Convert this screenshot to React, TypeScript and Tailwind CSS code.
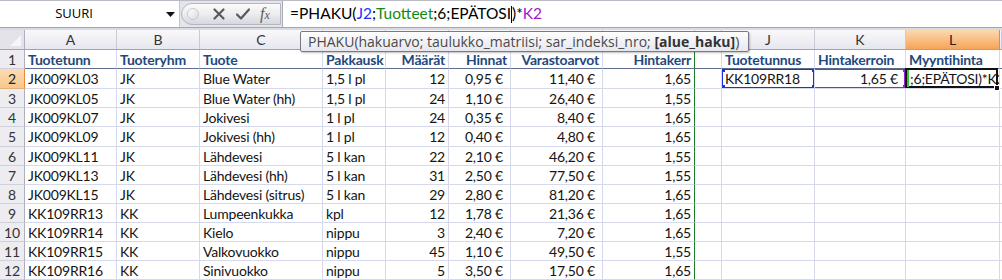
import React from "react";

type Col = { w: string; align?: "r"; money?: boolean };

// column layout A..L plus a sliver of M
const COLS: Col[] = [
  { w: "w-[92px]" },
  { w: "w-[83px]" },
  { w: "w-[123px]" },
  { w: "w-[63px]" },
  { w: "w-[63px]", align: "r" },
  { w: "w-[62px]", align: "r", money: true },
  { w: "w-[92px]", align: "r", money: true },
  { w: "w-[92px]", align: "r" },
  { w: "w-[27px]" },
  { w: "w-[93px]" },
  { w: "w-[91px]", align: "r", money: true },
  { w: "w-[94px]" },
  { w: "w-[2px]" },
];

const LETTERS = ["A", "B", "C", "D", "E", "F", "G", "H", "I", "J", "K", "L", ""];

const HEADER = ["Tuotetunn", "Tuoteryhm", "Tuote", "Pakkausk", "Määrät", "Hinnat", "Varastoarvot", "Hintakerr", "", "Tuotetunnus", "Hintakerroin", "Myyntihinta", ""];
// headings E..H sit on the right, the lookup block on the left
const HEADER_RIGHT = [4, 5, 6, 7];

const ROWS: string[][] = [
  ["JK009KL03", "JK", "Blue Water", "1,5 l pl", "12", "0,95 €", "11,40 €", "1,65"],
  ["JK009KL05", "JK", "Blue Water (hh)", "1,5 l pl", "24", "1,10 €", "26,40 €", "1,55"],
  ["JK009KL07", "JK", "Jokivesi", "1 l pl", "24", "0,35 €", "8,40 €", "1,65"],
  ["JK009KL09", "JK", "Jokivesi (hh)", "1 l pl", "12", "0,40 €", "4,80 €", "1,65"],
  ["JK009KL11", "JK", "Lähdevesi", "5 l kan", "22", "2,10 €", "46,20 €", "1,55"],
  ["JK009KL13", "JK", "Lähdevesi (hh)", "5 l kan", "31", "2,50 €", "77,50 €", "1,55"],
  ["JK009KL15", "JK", "Lähdevesi (sitrus)", "5 l kan", "29", "2,80 €", "81,20 €", "1,65"],
  ["KK109RR13", "KK", "Lumpeenkukka", "kpl", "12", "1,78 €", "21,36 €", "1,65"],
  ["KK109RR14", "KK", "Kielo", "nippu", "3", "2,40 €", "7,20 €", "1,65"],
  ["KK109RR15", "KK", "Valkovuokko", "nippu", "45", "1,10 €", "49,50 €", "1,55"],
  ["KK109RR16", "KK", "Sinivuokko", "nippu", "5", "3,50 €", "17,50 €", "1,65"],
];

const ROW_H = ["h-[20px]", "h-[19px]", "h-[19px]", "h-[20px]", "h-[19px]", "h-[19px]", "h-[19px]", "h-[19px]", "h-[19px]", "h-[19px]", "h-[19px]"];

function Handle({ className }: { className: string }) {
  return <div className={`absolute w-[5px] h-[5px] ${className}`} />;
}

function FormulaBar() {
  return (
    <div className="flex h-[28px] bg-[#e4e5eb] border-t border-[#b9bac4] border-b border-b-[#a4a6b3]">
      {/* name box */}
      <div className="w-[180px] bg-white flex items-center relative border-r border-[#c3c5cf]">
        <span className="w-[148px] text-center text-[13px] text-black font-['Open_Sans',sans-serif]">SUURI</span>
        <svg className="absolute left-[166px] top-[11px]" width="9" height="5" viewBox="0 0 9 5">
          <path d="M0 0 H9 L4.5 5 Z" fill="#111" />
        </svg>
      </div>
      {/* cancel / enter / fx */}
      <div className="w-[102px] flex items-center pl-[1px]">
        <div className="relative h-[22px] w-[100px] rounded-l-full border border-[#b3b5c1] bg-gradient-to-b from-[#fbfbfc] via-[#eceded] to-[#d6d8e0] flex items-center">
          <div className="ml-[5px] w-[12px] h-[12px] rounded-full border border-[#c9cad2] bg-gradient-to-br from-white to-[#d9dae2]" />
          <svg className="ml-[14px]" width="12" height="12" viewBox="0 0 12 12">
            <path d="M1.5 1.5 L10.5 10.5 M10.5 1.5 L1.5 10.5" stroke="#5a5a5e" strokeWidth="2.2" strokeLinecap="round" />
          </svg>
          <svg className="ml-[11px]" width="14" height="12" viewBox="0 0 14 12">
            <path d="M1 6.5 L5 10.5 L13 1.5" stroke="#5a5a5e" strokeWidth="2.2" fill="none" strokeLinejoin="round" strokeLinecap="round" />
          </svg>
          <span className="ml-[10px] font-['Liberation_Serif',serif] italic text-[16px] text-[#5a5a5e] leading-none">
            f<span className="text-[12px]">x</span>
          </span>
        </div>
      </div>
      {/* formula */}
      <div className="flex-1 bg-white border-l border-[#a9abb6] flex items-center pl-[7px] text-[15.5px] font-['Lato',sans-serif] text-black whitespace-nowrap">
        <span>=PHAKU(</span>
        <span className="text-[#2233ff]">J2</span>
        <span>;</span>
        <span className="text-[#108a10]">Tuotteet</span>
        <span>;6;EPÄTOSI</span>
        <span className="w-px h-[17px] bg-black" />
        <span>)*</span>
        <span className="text-[#a020c8]">K2</span>
      </div>
    </div>
  );
}

function ColumnHeaders() {
  return (
    <div className="flex h-[20px] border-b border-[#9fa3b5]">
      <div className="w-[25px] bg-[#e3e3e9] border-r border-[#aeb0bd] relative">
        <svg className="absolute right-[3px] bottom-[3px]" width="11" height="11" viewBox="0 0 11 11">
          <path d="M11 0 V11 H0 Z" fill="#f6f6f8" />
        </svg>
      </div>
      {COLS.map((c, i) => {
        const sel = LETTERS[i] === "L";
        return (
          <div
            key={i}
            className={`${c.w} shrink-0 flex items-center justify-center text-[14px] font-['Lato',sans-serif] border-r ${
              sel
                ? "bg-gradient-to-b from-[#fbd9b0] to-[#f6a456] border-[#e9893a] text-[#222]"
                : "bg-gradient-to-b from-[#f9f9fb] to-[#e6e6ee] border-[#c9cad6] text-[#333]"
            }`}
          >
            {LETTERS[i]}
          </div>
        );
      })}
    </div>
  );
}

function RowHead({ n, h, sel }: { n: number; h: string; sel?: boolean }) {
  return (
    <div
      className={`w-[25px] shrink-0 ${h} flex items-center justify-center text-[14px] font-['Lato',sans-serif] border-r border-b ${
        sel
          ? "bg-gradient-to-b from-[#fcdcb4] to-[#f8c78b] border-r-[#e9893a] border-b-[#e3b27a] text-[#222]"
          : "bg-[#ececf1] border-r-[#aeb0bd] border-b-[#cfd0db] text-[#333]"
      }`}
    >
      {n}
    </div>
  );
}

export default function App() {
  return (
    <div className="w-[1002px] h-[280px] overflow-hidden bg-white relative font-['Lato',sans-serif]">
      <FormulaBar />
      <div className="h-[2px] bg-[#d9dae2]" />
      <ColumnHeaders />

      {/* row 1: table headings */}
      <div className="flex h-[19px]">
        <RowHead n={1} h="h-[19px]" />
        {COLS.map((c, i) => (
          <div
            key={i}
            className={`${c.w} shrink-0 h-[19px] flex items-center whitespace-nowrap overflow-hidden border-b border-b-[#5d6c8d] border-r text-[14px] font-bold text-[#1f497d] tracking-[-0.2px] ${
              i === 7 ? "border-r-[#1e7b2a]" : "border-r-[#d6d9ec]"
            } ${HEADER_RIGHT.includes(i) ? "justify-end pr-[3px]" : "pl-[3px]"}`}
          >
            {HEADER[i]}
          </div>
        ))}
      </div>

      {ROWS.map((r, ri) => {
        const h = ROW_H[ri];
        const first = ri === 0;
        return (
          <div key={ri} className="flex">
            <RowHead n={ri + 2} h={h} sel={first} />
            {COLS.map((c, i) => {
              let text: React.ReactNode = i < 8 ? r[i] : "";
              let extra = "";
              let overlay: React.ReactNode = null;
              if (first && i === 9) {
                text = "KK109RR18";
                overlay = (
                  <>
                    <div className="absolute inset-0 border border-[#1f2fe8]" />
                    <Handle className="-left-[2px] -top-[2px] bg-[#1f2fe8]" />
                    <Handle className="-right-[3px] -top-[2px] bg-[#1f2fe8]" />
                    <Handle className="-left-[2px] -bottom-[2px] bg-[#1f2fe8]" />
                    <Handle className="-right-[3px] -bottom-[2px] bg-[#1f2fe8]" />
                  </>
                );
              }
              if (first && i === 10) {
                text = "1,65 €";
                overlay = (
                  <>
                    <div className="absolute inset-0 border border-[#a01fd0] border-l-0" />
                    <Handle className="-right-[3px] -top-[2px] bg-[#a01fd0]" />
                    <Handle className="-right-[3px] -bottom-[2px] bg-[#a01fd0]" />
                  </>
                );
              }
              if (first && i === 11) {
                text = ";6;EPÄTOSI)*K2";
                extra = "z-10";
                overlay = (
                  <>
                    <div className="absolute -left-[1px] -top-[1px] right-[1px] bottom-0 border-2 border-[#111]" />
                    <div className="absolute left-[1px] top-[1px] bottom-[1px] w-[2px] bg-[#38c43a]" />
                    <Handle className="right-[-1px] -bottom-[3px] bg-[#111] border border-white w-[6px] h-[6px]" />
                  </>
                );
              }
              const pad = c.align === "r" ? (c.money ? "justify-end pr-[7px]" : "justify-end pr-[3px]") : "pl-[3px]";
              const right = i === 7 ? "border-r-[#1e7b2a]" : "border-r-[#d6d9ec]";
              return (
                <div
                  key={i}
                  className={`${c.w} shrink-0 ${h} relative flex items-center whitespace-nowrap border-r border-b border-b-[#d6d9ec] ${right} text-[14px] text-[#141414] tracking-[-0.2px] ${pad} ${extra} ${
                    i === 11 ? "overflow-visible" : "overflow-hidden"
                  }`}
                >
                  {i === 11 && first ? (
                    <span className="pl-[1px] overflow-hidden w-[90px] block">{text}</span>
                  ) : (
                    text
                  )}
                  {overlay}
                </div>
              );
            })}
          </div>
        );
      })}

      {/* function argument tooltip */}
      <div className="absolute left-[300px] top-[31px] w-[449px] h-[21px] rounded-[2px] border border-[#7a7a84] bg-gradient-to-b from-white to-[#e6e6ee] shadow-[1px_1px_2px_rgba(0,0,0,0.25)] flex items-center pl-[7px] text-[14px] text-[#4a4a4a] font-['Open_Sans',sans-serif] whitespace-nowrap">
        PHAKU(hakuarvo; taulukko_matriisi; sar_indeksi_nro;&nbsp;<b className="text-[#333] font-bold">[alue_haku]</b>)
      </div>
    </div>
  );
}
